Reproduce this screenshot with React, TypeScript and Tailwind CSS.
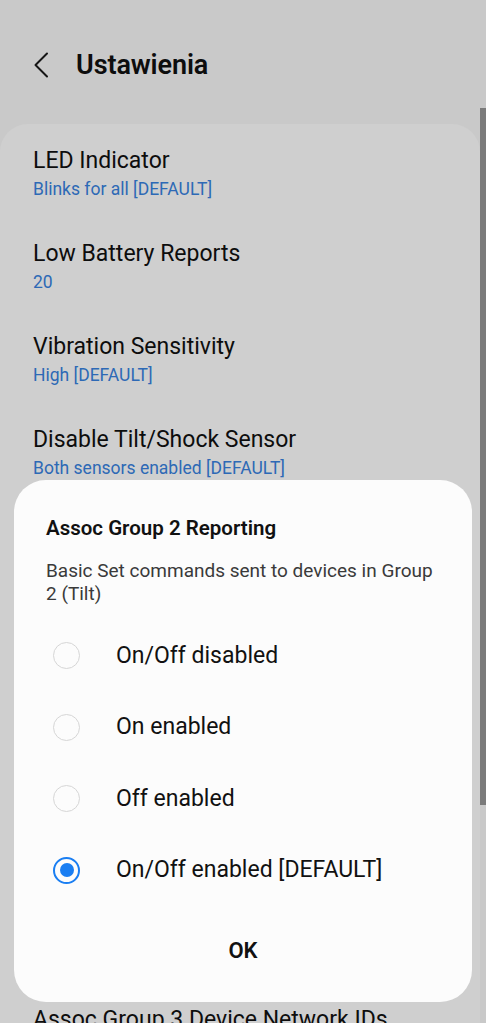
import { useState } from 'react'

// hidden = covered by the dialog
const items = [
  { title: 'LED Indicator', value: ['Blinks for all [DEFAULT]'] },
  { title: 'Low Battery Reports', value: ['20'] },
  { title: 'Vibration Sensitivity', value: ['High [DEFAULT]'] },
  { title: 'Disable Tilt/Shock Sensor', value: ['Both sensors enabled [DEFAULT]'] },
  { title: 'Assoc Group 2 Reporting', value: ['On/Off enabled [DEFAULT]'], hidden: true },
  { title: 'Assoc Group 2 Device Network IDs', value: ['Not set'], hidden: true },
  { title: 'Assoc Group 2 Basic Set Value', value: ['255 [DEFAULT]'], hidden: true },
  { title: 'Assoc Group 3 Reporting', value: ['Basic Set commands sent to devices in', 'Group 3 [DEFAULT]'], hidden: true },
  { title: 'Assoc Group 3 Basic Set Value', value: ['255 [DEFAULT]'], hidden: true },
  { title: 'Assoc Group 3 Device Network IDs', value: ['Not set'] },
]

const options = ['On/Off disabled', 'On enabled', 'Off enabled', 'On/Off enabled [DEFAULT]']

export default function App() {
  const [selected, setSelected] = useState(3)

  return (
    <div
      className="relative h-[1023px] w-[486px] overflow-hidden bg-[#f6f6f6] text-[#111]"
      style={{ fontFamily: 'Roboto, "Noto Sans", sans-serif' }}
    >
      {/* header */}
      <div className="flex h-[124px] items-start pt-[48px]">
        <div className="ml-[33px] flex h-[34px] w-[18px] items-center">
          <svg width="16" height="26" viewBox="0 0 16 26" fill="none">
            <path d="M14 1.5 L2.5 13 L14 24.5" stroke="#1a1a1a" strokeWidth="2" strokeLinecap="round" strokeLinejoin="round" />
          </svg>
        </div>
        <h1 className="ml-[25px] text-[27px] font-semibold leading-[34px] tracking-[-0.1px]">Ustawienia</h1>
      </div>

      {/* settings list */}
      <div className="mr-[6px] rounded-[28px] bg-[#fdfdfd]">
        {items.map((it) => (
          <div key={it.title} className={`px-[33px] pb-[17px] pt-[23px] ${it.hidden ? 'invisible' : ''}`}>
            <div className="text-[23px] leading-[28px]">{it.title}</div>
            <div className="mt-[3px] text-[17.5px] leading-[22px] text-[#3781de]">
              {it.value.map((v) => (
                <div key={v}>{v}</div>
              ))}
            </div>
          </div>
        ))}
      </div>

      {/* scrollbar */}
      <div className="absolute right-0 top-[108px] h-[697px] w-[6px] bg-[#979797]" />

      {/* scrim */}
      <div className="absolute inset-0 bg-black/[0.18]" />

      {/* dialog */}
      <div className="absolute left-[14px] top-[480px] h-[522px] w-[458px] rounded-[32px] bg-[#fcfcfc] pt-[35px]">
        <div className="px-[32px]">
          <h2 className="text-[20.5px] font-semibold leading-[26px] text-[#111]">Assoc Group 2 Reporting</h2>
          <p className="mt-[18px] text-[19px] leading-[23px] text-[#3a3a3a]">
            Basic Set commands sent to devices in Group 2 (Tilt)
          </p>
        </div>
        <div className="mt-[15px] pl-[39px]">
          {options.map((o, i) => (
            <button
              key={o}
              onClick={() => setSelected(i)}
              className="flex h-[71.5px] w-full items-center text-left"
            >
              {selected === i ? (
                <span className="flex h-[27px] w-[27px] items-center justify-center rounded-full border-2 border-[#1a7ef2]">
                  <span className="h-[14px] w-[14px] rounded-full bg-[#1a7ef2]" />
                </span>
              ) : (
                <span className="h-[27px] w-[27px] rounded-full border-[1.5px] border-[#d6d6d6]" />
              )}
              <span className="ml-[36px] text-[23px] leading-[28px] text-[#111]">{o}</span>
            </button>
          ))}
        </div>
        <div className="mt-[16px] flex h-[56px] items-center justify-center">
          <span className="text-[22px] font-semibold text-[#111]">OK</span>
        </div>
      </div>
    </div>
  )
}
